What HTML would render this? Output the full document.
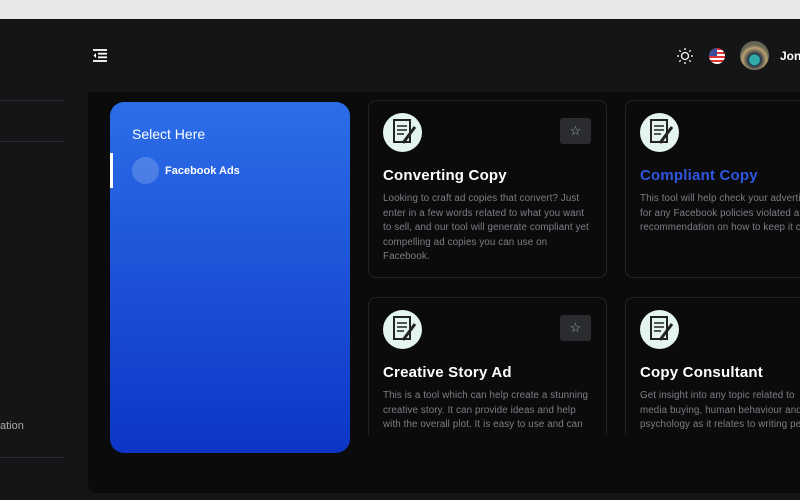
<!DOCTYPE html>
<html><head><style>
*{margin:0;padding:0;box-sizing:border-box}
body{width:800px;height:500px;overflow:hidden;background:#141517;font-family:"Liberation Sans",sans-serif;position:relative}
.top{position:absolute;left:0;top:0;width:800px;height:19px;background:#e8e8e8}
.line{position:absolute;left:0;width:64px;height:1px;background:#2a2b2e}
.panel{position:absolute;left:88px;top:92px;width:720px;height:401px;background:#0b0b0c;border-radius:0 0 0 8px}
.blue{position:absolute;left:110px;top:102px;width:240px;height:351px;border-radius:14px;background:linear-gradient(180deg,#2b6ee8,#0d35c6)}
.clip{position:absolute;left:360px;top:92px;width:440px;height:343px;overflow:hidden}
.card{position:absolute;width:239px;height:178px;border:1px solid #222327;border-radius:8px;padding:12px 14px}
.ic{width:39px;height:39px;border-radius:50%;background:#e3f5ee;position:relative;overflow:hidden}
.star{position:absolute;right:15px;top:17px;width:31px;height:26px;background:#2a2c30;border-radius:3px;color:#9aa;font-size:13px;text-align:center;line-height:26px}
h3{font-size:15px;color:#fff;margin-top:15px;font-weight:bold;letter-spacing:.2px}
p{font-size:9.8px;color:#7d7f86;line-height:14.5px;margin-top:8px;white-space:nowrap;letter-spacing:.1px}
</style></head><body>
<div class="top"></div>
<div class="line" style="top:100px"></div>
<div class="line" style="top:141px"></div>
<div class="line" style="top:457px"></div>
<div style="position:absolute;left:0;top:420px;color:#aaa;font-size:11px">ation</div>
<svg style="position:absolute;left:93px;top:49px" width="14" height="13" viewBox="0 0 14 13"><g stroke="#fff" stroke-width="1.8"><line x1="0" y1="1" x2="14" y2="1"/><line x1="5" y1="4.7" x2="14" y2="4.7"/><line x1="5" y1="8.3" x2="14" y2="8.3"/><line x1="0" y1="12" x2="14" y2="12"/></g><path d="M3 4L0.5 6.5L3 9Z" fill="#fff"/></svg>
<svg style="position:absolute;left:677px;top:48px" width="16" height="16" viewBox="0 0 16 16"><circle cx="8" cy="8" r="3.5" fill="none" stroke="#fff" stroke-width="1.3"/><g stroke="#fff" stroke-width="1.3"><line x1="8" y1="0" x2="8" y2="2"/><line x1="8" y1="14" x2="8" y2="16"/><line x1="0" y1="8" x2="2" y2="8"/><line x1="14" y1="8" x2="16" y2="8"/><line x1="2.3" y1="2.3" x2="3.7" y2="3.7"/><line x1="12.3" y1="12.3" x2="13.7" y2="13.7"/><line x1="2.3" y1="13.7" x2="3.7" y2="12.3"/><line x1="12.3" y1="3.7" x2="13.7" y2="2.3"/></g></svg>
<div style="position:absolute;left:709px;top:48px;width:16px;height:16px;border-radius:50%;background:repeating-linear-gradient(180deg,#d33 0 2px,#fff 2px 4px);overflow:hidden"><div style="width:8px;height:8px;background:#3b4b9a"></div></div>
<div style="position:absolute;left:740px;top:41px;width:29px;height:29px;border-radius:50%;background:radial-gradient(circle at 50% 65%,#3aa 0 5px,#234 6px,#bba070 12px,#665 15px)"></div>
<div style="position:absolute;left:780px;top:49px;color:#fff;font-size:12px;font-weight:bold">Jon</div>
<div class="panel"></div>
<div class="blue">
<div style="position:absolute;left:22px;top:24px;color:#fff;font-size:14px">Select Here</div>
<div style="position:absolute;left:0;top:51px;width:3px;height:35px;background:#fff"></div>
<div style="position:absolute;left:22px;top:55px;width:27px;height:27px;border-radius:50%;background:rgba(255,255,255,.18)"></div>
<div style="position:absolute;left:55px;top:63px;color:#fff;font-size:11px;font-weight:bold">Facebook Ads</div>
</div>
<div class="clip">
<div class="card" style="left:8px;top:8px"><div class="ic"><svg width="39" height="39"><rect x="11" y="7" width="16" height="22" fill="none" stroke="#222" stroke-width="2"/><g stroke="#222" stroke-width="1.5"><line x1="14" y1="13" x2="24" y2="13"/><line x1="14" y1="17" x2="24" y2="17"/><line x1="14" y1="21" x2="21" y2="21"/></g><line x1="20" y1="30" x2="32" y2="14" stroke="#222" stroke-width="3"/></svg></div><div class="star">☆</div><h3>Converting Copy</h3><p>Looking to craft ad copies that convert? Just<br>enter in a few words related to what you want<br>to sell, and our tool will generate compliant yet<br>compelling ad copies you can use on<br>Facebook.</p></div>
<div class="card" style="left:265px;top:8px"><div class="ic"><svg width="39" height="39"><rect x="11" y="7" width="16" height="22" fill="none" stroke="#222" stroke-width="2"/><g stroke="#222" stroke-width="1.5"><line x1="14" y1="13" x2="24" y2="13"/><line x1="14" y1="17" x2="24" y2="17"/><line x1="14" y1="21" x2="21" y2="21"/></g><line x1="20" y1="30" x2="32" y2="14" stroke="#222" stroke-width="3"/></svg></div><h3 style="color:#2f56e0">Compliant Copy</h3><p>This tool will help check your advertisement<br>for any Facebook policies violated and<br>recommendation on how to keep it compliant</p></div>
<div class="card" style="left:8px;top:205px"><div class="ic"><svg width="39" height="39"><rect x="11" y="7" width="16" height="22" fill="none" stroke="#222" stroke-width="2"/><g stroke="#222" stroke-width="1.5"><line x1="14" y1="13" x2="24" y2="13"/><line x1="14" y1="17" x2="24" y2="17"/><line x1="14" y1="21" x2="21" y2="21"/></g><line x1="20" y1="30" x2="32" y2="14" stroke="#222" stroke-width="3"/></svg></div><div class="star">☆</div><h3>Creative Story Ad</h3><p>This is a tool which can help create a stunning<br>creative story. It can provide ideas and help<br>with the overall plot. It is easy to use and can</p></div>
<div class="card" style="left:265px;top:205px"><div class="ic"><svg width="39" height="39"><rect x="11" y="7" width="16" height="22" fill="none" stroke="#222" stroke-width="2"/><g stroke="#222" stroke-width="1.5"><line x1="14" y1="13" x2="24" y2="13"/><line x1="14" y1="17" x2="24" y2="17"/><line x1="14" y1="21" x2="21" y2="21"/></g><line x1="20" y1="30" x2="32" y2="14" stroke="#222" stroke-width="3"/></svg></div><h3>Copy Consultant</h3><p>Get insight into any topic related to<br>media buying, human behaviour and<br>psychology as it relates to writing persuasive</p></div>
</div>
</body></html>
